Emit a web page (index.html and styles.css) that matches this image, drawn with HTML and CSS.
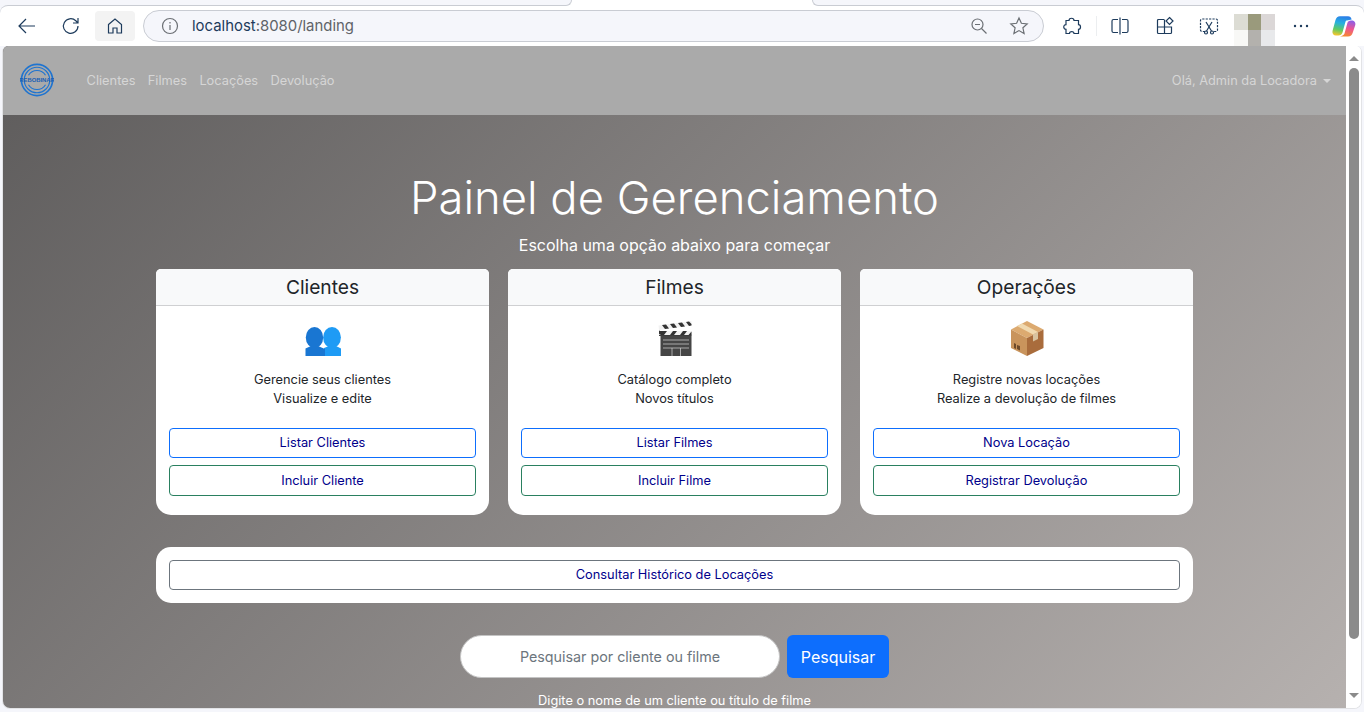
FILE: index.html
```html
<!DOCTYPE html>
<html lang="pt-BR">
<head>
	<meta charset="UTF-8">
	<title>Locadora</title>
	<link rel="stylesheet" href="styles.css">
</head>
<body>
	<div class="tabstrip"><div class="tab"></div></div>

	<div class="toolbar">
		<span class="tool"><svg width="20" height="20" viewBox="0 0 20 20"><path d="M18 10H2M9 3l-7 7 7 7"/></svg></span>
		<span class="tool"><svg width="20" height="20" viewBox="0 0 20 20"><path d="M17 10a7.3 7.3 0 1 1-2.2-5.2L17 7M17 2v5h-5"/></svg></span>
		<span class="tool tool-home"><svg width="18" height="18" viewBox="0 0 18 18"><path d="M2.5 7.5 9 2l6.500 5.500V16h-4.500v-5H7v5H2.500z"/></svg></span>
		<div class="address">
			<svg class="addr-info" width="18" height="18" viewBox="0 0 18 18"><circle cx="9" cy="9" r="7.500"/><path d="M9 8v5M9 5v1.400"/></svg>
			<span class="url"><b>localhost</b>:8080/landing</span>
			<svg class="addr-zoom" width="18" height="18" viewBox="0 0 18 18"><circle cx="7.500" cy="7.500" r="5.500"/><path d="M5 7.500h5M11.500 11.500l5 5"/></svg>
			<svg class="addr-star" width="20" height="20" viewBox="0 0 20 20"><path d="M10 2l2.400 5.300 5.800.6-4.300 3.900 1.200 5.700L10 14.600l-5.100 2.900 1.200-5.700L1.800 7.900l5.800-.6z"/></svg>
		</div>
		<span class="tool tool-ext"><svg width="20" height="20" viewBox="0 0 20 20"><path d="M7 4.500C7 1.500 12 1.500 12 4.500h4.500v4.200c2.700 0 2.700 4.600 0 4.600V17.500h-4.500c0-2.600-4.500-2.600-4.500 0H4v-4.200c-3 0-3-4.600 0-4.600V4.500z"/></svg></span>
		<span class="sep"></span>
		<span class="tool"><svg width="20" height="20" viewBox="0 0 20 20"><path d="M8 3.500H3.500a1.500 1.500 0 0 0-1.500 1.500v10a1.500 1.500 0 0 0 1.500 1.500H8M12 3.500h4.500A1.500 1.500 0 0 1 18 5v10a1.500 1.500 0 0 1-1.500 1.500H12M10 1.500v17"/></svg></span>
		<span class="tool tool-fav"><svg width="20" height="20" viewBox="0 0 20 20"><path d="M9 3.500H3.500a1 1 0 0 0-1 1v12a1 1 0 0 0 1 1h12a1 1 0 0 0 1-1V11H2.500M9.500 3.500v14"/><path d="M14.500 1.500l3.500 3.500-3.500 3.500L11 5z"/></svg></span>
		<span class="tool"><svg width="20" height="20" viewBox="0 0 20 20"><path class="dash" d="M6 15.500H3a1.500 1.500 0 0 1-1.500-1.500V4.500A1.500 1.500 0 0 1 3 3h14a1.500 1.500 0 0 1 1.500 1.500V14a1.500 1.500 0 0 1-1.500 1.500h-3"/><path d="M7 6l5.500 9M13 6l-5.500 9"/><circle cx="7" cy="16.500" r="1.500"/><circle cx="13" cy="16.500" r="1.500"/></svg></span>
		<div class="avatar">
			<i class="px1"></i><i class="px2"></i><i class="px3"></i>
			<i class="px4"></i><i class="px5"></i><i class="px6"></i>
		</div>
		<span class="tool tool-more"><svg width="20" height="20" viewBox="0 0 20 20"><circle class="dot" cx="4" cy="10" r="1.200"/><circle class="dot" cx="10" cy="10" r="1.200"/><circle class="dot" cx="16" cy="10" r="1.200"/></svg></span>
		<span class="tool tool-copilot">
			<svg width="24" height="24" viewBox="0 0 24 24">
				<defs>
					<linearGradient id="cpL" x1=".5" y1="0" x2=".3" y2="1"><stop offset="0" stop-color="#2b7fe8"/><stop offset=".35" stop-color="#27b0e0"/><stop offset=".7" stop-color="#5fcb63"/><stop offset="1" stop-color="#f5c52d"/></linearGradient>
					<linearGradient id="cpR" x1=".6" y1="0" x2=".4" y2="1"><stop offset="0" stop-color="#8d5ee8"/><stop offset=".5" stop-color="#ef5590"/><stop offset="1" stop-color="#f58a2d"/></linearGradient>
				</defs>
				<path class="cp" fill="url(#cpL)" d="M8 2.200H16C18 2.200 19.200 3.400 19.700 5.500L15 6.500C14 6.500 13.600 7.200 13.400 8L10.500 18.500C9.800 20.500 8.500 21.500 6.500 21.500H4C1.500 21.500 0 19.500 .5 17L3.500 6C4.200 3.600 5.600 2.200 8 2.200z"/>
				<path class="cp" fill="url(#cpR)" d="M19 6.500C21.800 6.200 24 8 23.300 11L20.800 18.500C20 21 18.500 22.500 16 22.500H8C10.500 22 12 20.800 12.500 19.500L15.400 9C15.800 7.500 17 6.600 19 6.500z"/>
			</svg>
		</span>
	</div>

	<div class="viewport">
		<div class="page">
			<nav class="navbar">
				<svg class="logo" width="34" height="34" viewBox="0 0 36 36">
					<circle class="ring" cx="18" cy="18" r="16.500"/>
					<circle cx="18" cy="18" r="13.500"/>
					<path d="M9 13a10.500 10.500 0 0 1 18 0M27 23a10.500 10.500 0 0 1-18 0"/>
					<text x="18" y="20.200" text-anchor="middle">REBOBINAR</text>
				</svg>
				<a class="nav-link" href="#">Clientes</a>
				<a class="nav-link" href="#">Filmes</a>
				<a class="nav-link" href="#">Locações</a>
				<a class="nav-link" href="#">Devolução</a>
				<a class="nav-link nav-user" href="#">Olá, Admin da Locadora<span class="caret"></span></a>
			</nav>

			<main class="content">
				<h1 class="title">Painel de Gerenciamento</h1>
				<p class="subtitle">Escolha uma opção abaixo para começar</p>

				<div class="cards">
					<section class="card">
						<h2 class="card-header">Clientes</h2>
						<div class="card-body">
							<svg class="icon" width="38" height="36" viewBox="0 0 38 36">
								<ellipse cx="28" cy="16.500" rx="8.900" ry="10.500" fill="#1e9bf5"/>
								<path d="M20 35v-8l5-2h7l5 2.500V35z" fill="#1e9bf5"/>
								<ellipse cx="10.500" cy="16.500" rx="8.700" ry="10.500" fill="#1976d2"/>
								<path d="M1.500 35v-7.500L7 25h7l7 3v7z" fill="#1976d2"/>
							</svg>
							<p class="card-text">Gerencie seus clientes<br>Visualize e edite</p>
							<a class="btn btn-blue" href="#">Listar Clientes</a>
							<a class="btn btn-green" href="#">Incluir Cliente</a>
						</div>
					</section>
					<section class="card">
						<h2 class="card-header">Filmes</h2>
						<div class="card-body">
							<svg class="icon" width="38" height="36" viewBox="0 0 38 36">
								<rect x="4.500" y="14.500" width="31" height="20.500" fill="#454545"/>
								<path d="M3 9v6h32.500v-1.500H6z" fill="#3d3d3d"/>
								<path d="M2.500 4.500 35.500 0v4.500L3 9z" fill="#f2f2f2"/>
								<path d="M6 4l3 4 4-.6-3-4zM14 3l3 4 4-.6-3-4zM22 2l3 4 4-.6-3-4zM30 .9l3 4 2.500-.4V3L33 .5z" fill="#333"/>
								<path d="M3 10h32.500v4H3z" fill="#f2f2f2"/>
								<path d="M3 10v3l2 1h3l3-4zM14 14h4l3-4h-4zM24 14h4l3-4h-4zM32.500 14h3v-3.500z" fill="#333"/>
								<path d="M7 19h26M7 23h26M7 27h26M16 27v8M24.500 27v8" stroke="#c4c4c4" stroke-width=".8" fill="none"/>
							</svg>
							<p class="card-text">Catálogo completo<br>Novos títulos</p>
							<a class="btn btn-blue" href="#">Listar Filmes</a>
							<a class="btn btn-green" href="#">Incluir Filme</a>
						</div>
					</section>
					<section class="card">
						<h2 class="card-header">Operações</h2>
						<div class="card-body">
							<svg class="icon" width="38" height="36" viewBox="0 0 38 36">
								<path d="M19 0 35.500 8.500 19 17 3 8.500z" fill="#dcaa70"/>
								<path d="M3 8.500l16 8.500v18L3 27z" fill="#c9945c"/>
								<path d="M35.500 8.500 19 17v18l16.500-8z" fill="#a96c3c"/>
								<path d="M9 5 25 13.500 30 11 14 2.500z" fill="#f0d9b0"/>
								<path d="M25 13.500 30 11v7l-5 2.500z" fill="#d8c3a0"/>
								<path d="M6 22v5l2 1v-5zM9 24v4l3 1.500V25z" fill="#6e4a2a"/>
							</svg>
							<p class="card-text">Registre novas locações<br>Realize a devolução de filmes</p>
							<a class="btn btn-blue" href="#">Nova Locação</a>
							<a class="btn btn-green" href="#">Registrar Devolução</a>
						</div>
					</section>
				</div>

				<div class="history">
					<a class="btn btn-gray" href="#">Consultar Histórico de Locações</a>
				</div>

				<form class="search">
					<input class="search-input" type="text" placeholder="Pesquisar por cliente ou filme">
					<button class="search-btn" type="button">Pesquisar</button>
				</form>
				<p class="hint">Digite o nome de um cliente ou título de filme</p>
			</main>
		</div>

		<div class="scrollbar">
			<span class="arrow-up"></span>
			<span class="thumb"></span>
			<span class="arrow-down"></span>
		</div>
	</div>
</body>
</html>
```

FILE: styles.css
```css
/*css reset*/
html,body,h1,h2,p{
	margin: 0;
	padding: 0;
}
html,body{
	height: 712px;
	overflow: hidden;
}
body{
	background: #f5f6fb;
	font-family: Inter, "Noto Sans", sans-serif;
	color: #212529;
	display: flex;
	flex-direction: column;
}
a{text-decoration: none;}

/*browser chrome*/
.tabstrip{
	height: 5px;
	flex: none;
	position: relative;
	z-index: 1;
}
.tab{
	width: 256px;
	height: 6px;
	margin-left: 564px;
	background: #fff;
	display: flex;
	justify-content: space-between;
}
.tab::before,.tab::after{
	content: "";
	width: 8px;
	height: 6px;
	box-sizing: border-box;
	background: #f5f6fb;
	border-bottom: 1px solid #c9ccd3;
}
.tab::before{
	border-right: 1px solid #c9ccd3;
	border-bottom-right-radius: 8px;
}
.tab::after{
	border-left: 1px solid #c9ccd3;
	border-bottom-left-radius: 8px;
}
.toolbar{
	height: 41px;
	flex: none;
	padding-left: 5px;
	background: #fff;
	border-top: 1px solid #c9ccd3;
	border-top-left-radius: 8px;
	border-top-right-radius: 8px;
	display: flex;
	align-items: center;
	box-sizing: border-box;
}
.toolbar svg{
	fill: none;
	stroke: #1d3b5c;
	stroke-width: 1.200;
}
.tool{
	width: 44px;
	height: 30px;
	flex: none;
	display: flex;
	align-items: center;
	justify-content: center;
}
.tool-home{
	width: 40px;
	margin-left: 2px;
	background: #f3f3f3;
	border-radius: 4px;
}
.tool-ext{margin-left: 6px;}
.tool-fav{margin-left: 1px;}
.tool-more{margin-left: 4px;}
.tool-copilot{margin-left: -1px;}
.toolbar svg .dot{
	fill: #1d3b5c;
	stroke: none;
}
.toolbar svg .cp{stroke: none;}
.toolbar svg .dash{stroke-dasharray: 2.200 1.200;}
.sep{
	width: 1px;
	height: 20px;
	flex: none;
	background: #eceef0;
	margin: 0 1px 0 2px;
}
.address{
	width: 901px;
	height: 32px;
	flex: none;
	margin-left: 8px;
	padding: 0 14px 0 17px;
	background: #f5f6fb;
	border: 1px solid #c9ccd3;
	border-radius: 16px;
	box-sizing: border-box;
	display: flex;
	align-items: center;
}
.toolbar .address svg{stroke: #6b6f74;}
.url{
	margin-left: 13px;
	font-size: 14.900px;
	color: #5f6368;
	flex: 1;
}
.url b{
	font-weight: 400;
	color: #1d3b5c;
}
.addr-zoom{margin-right: 21px;}
.avatar{
	width: 41px;
	height: 32px;
	flex: none;
	margin: 0 0 0 3px;
	align-self: flex-end;
	display: grid;
	grid-template-columns: repeat(3,1fr);
	grid-template-rows: 16px 16px;
}
.px1{background: #dcdcd4;}
.px2{background: #9a9a7c;}
.px3{background: #dbd7d7;}
.px4{background: #f8f8f6;}
.px5{background: #b3b1ad;}
.px6{background: #e8e9eb;}

/*viewport*/
.viewport{
	height: 663px;
	flex: none;
	margin: 0 2px 3px 2px;
	background: #fff;
	border: 1px solid #e2e3e6;
	border-top: 0;
	border-radius: 6px 6px 8px 8px;
	overflow: hidden;
	display: flex;
	box-sizing: border-box;
}
.page{
	flex: 1;
	min-width: 0;
	display: flex;
	flex-direction: column;
	background: linear-gradient(135deg,#5d5b5b 0%,#b6b1af 100%);
}
.navbar{
	height: 69px;
	flex: none;
	padding: 0 15px 1px 17px;
	box-sizing: border-box;
	background: #aaa;
	display: flex;
	align-items: center;
	font-size: 12.800px;
}
.logo{
	margin-right: 26.400px;
	fill: none;
	stroke: #1f74d0;
	stroke-width: 1.200;
}
.logo .ring{stroke-width: 1.800;}
.logo text{
	font: 700 6.200px "Liberation Sans", sans-serif;
	fill: #1a5fb4;
	stroke: none;
}
.nav-link{
	color: #d6d6d6;
	padding: 0 6.200px;
}
.nav-user{
	margin-left: auto;
	padding-right: 0;
}
.caret{
	display: inline-block;
	margin-left: 6px;
	vertical-align: 2px;
	border-top: 4px solid #d6d6d6;
	border-left: 4px solid transparent;
	border-right: 4px solid transparent;
}

/*main content*/
.content{
	padding-top: 56px;
	display: flex;
	flex-direction: column;
	align-items: center;
}
.title{
	font-size: 45.400px;
	font-weight: 300;
	line-height: 54px;
	color: #fff;
}
.subtitle{
	margin-top: 8px;
	font-size: 16px;
	line-height: 24px;
	color: #fff;
}
.cards{
	width: 1037px;
	margin-top: 12px;
	display: grid;
	grid-template-columns: repeat(3,333px);
	column-gap: 19px;
}
.card{
	background: #fff;
	border-radius: 5px 5px 15px 15px;
	overflow: hidden;
}
.card-header{
	height: 37px;
	box-sizing: border-box;
	background: #f8f9fa;
	border-bottom: 1px solid #cfd0d2;
	font-size: 19.200px;
	font-weight: 400;
	line-height: 36px;
	text-align: center;
}
.card-body{
	padding: 15px 13px 19px;
	display: flex;
	flex-direction: column;
	align-items: stretch;
	gap: 7px;
}
.icon{
	align-self: center;
	display: block;
	margin-bottom: 6px;
}
.card-text{
	margin-bottom: 13px;
	font-size: 12.800px;
	line-height: 19px;
	text-align: center;
}
.btn{
	display: block;
	height: 30.400px;
	line-height: 28px;
	border: 1px solid #0d6efd;
	border-radius: 4px;
	box-sizing: border-box;
	font-size: 12.800px;
	color: #00008b;
	text-align: center;
	background: #fff;
}
.btn-green{
	border-color: #2a8060;
	line-height: 29px;
}
.btn-gray{border-color: #6c757d;}
.history{
	width: 1037px;
	margin-top: 32px;
	padding: 13px;
	background: #fff;
	border-radius: 15px;
	box-sizing: border-box;
}
.search{
	margin-top: 32px;
	display: flex;
	gap: 7px;
}
.search-input{
	width: 320px;
	height: 43px;
	padding: 0 16px;
	background: #fff;
	border: 1px solid #c4c4c4;
	border-radius: 22px;
	box-sizing: border-box;
	font: 14.300px Inter, "Noto Sans", sans-serif;
	text-align: center;
	color: #212529;
	outline: 0;
}
.search-input::placeholder{color: #6c757d;opacity: 1;}
.search-btn{
	width: 102px;
	height: 43px;
	border: 0;
	border-radius: 6px;
	background: #0d6efd;
	color: #fff;
	font: 16px Inter, "Noto Sans", sans-serif;
}
.hint{
	margin-top: 13px;
	font-size: 12.800px;
	line-height: 19px;
	color: #fff;
}

/*scrollbar*/
.scrollbar{
	width: 15px;
	flex: none;
	padding-top: 10px;
	background: #fff;
	display: flex;
	flex-direction: column;
	align-items: center;
}
.arrow-up{
	border-bottom: 5px solid #8b8b8b;
	border-left: 5px solid transparent;
	border-right: 5px solid transparent;
}
.thumb{
	width: 10px;
	height: 571px;
	margin-top: 7px;
	background: #8b8b8b;
	border-radius: 5px;
}
.arrow-down{
	margin-top: 54px;
	border-top: 5px solid #8b8b8b;
	border-left: 5px solid transparent;
	border-right: 5px solid transparent;
}
```
